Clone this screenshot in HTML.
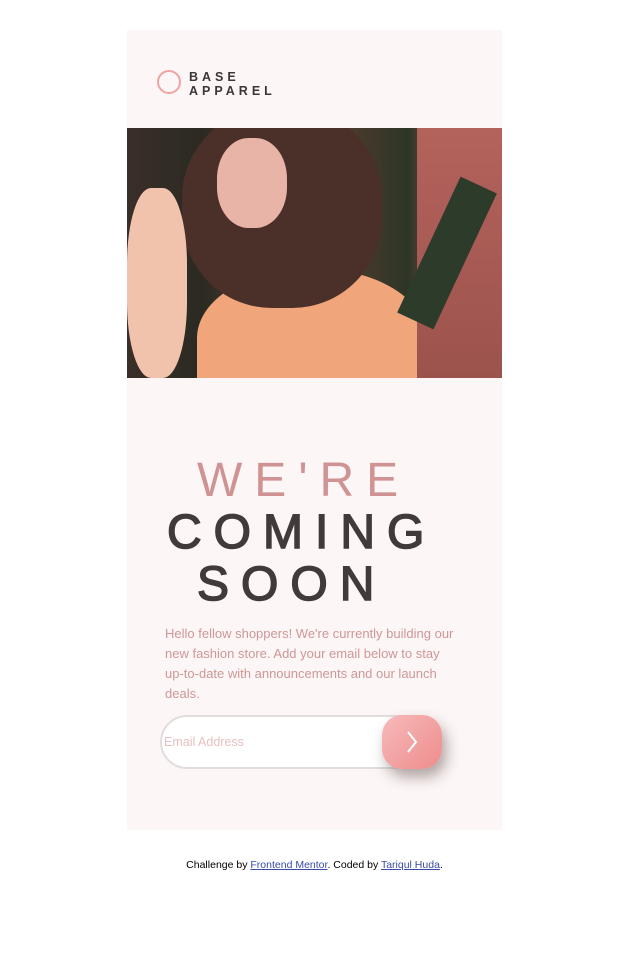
<!DOCTYPE html>
<html><head><style>
*{margin:0;padding:0;box-sizing:border-box}
body{width:629px;height:954px;background:#fff;font-family:"Liberation Sans",sans-serif;position:relative;overflow:hidden}
.card{position:absolute;left:127px;top:30px;width:375px;height:800px;background:#fdf6f6}
.logo{position:absolute;left:30px;top:40px}
.circ{position:absolute;left:0;top:0;width:24px;height:24px;border:2.5px solid #f0a3a3;border-radius:50%}
.lt{position:absolute;left:32px;top:0px;font-weight:bold;font-size:12.5px;letter-spacing:4px;line-height:14px;color:#3d3636;white-space:nowrap}
.img{position:absolute;left:0;top:98px;width:375px;height:250px;overflow:hidden;background:linear-gradient(90deg,#3a2e28 0%,#2b2a22 20%,#5a4036 40%,#4a3a2c 60%,#2d3527 75%,#b45e58 90%,#9a4c48 100%)}
h1{position:absolute;left:0;width:375px;top:425px;font-weight:normal;font-size:48px;line-height:52px;letter-spacing:12px}
.p{position:absolute;left:38px;top:594px;width:292px;font-size:13px;line-height:20px;color:#ce9797}
.inp{position:absolute;left:33px;top:685px;width:282px;height:54px;border:2px solid #e2dcdc;border-radius:28px;background:#fff}
.inp span{position:absolute;left:2px;top:18px;font-size:12.5px;color:#e8c0c0}
.btn{position:absolute;left:255px;top:685px;width:60px;height:54px;border-radius:20px;background:linear-gradient(135deg,#f7baba,#ee8c8c);box-shadow:4px 8px 14px rgba(80,60,60,.45)}
.foot{position:absolute;top:859px;left:0;width:629px;text-align:center;font-size:10.5px}
.foot a{color:#3a4ba8;text-decoration:underline}
</style></head><body>
<div class="card">
 <div class="logo"><div class="circ"></div><div class="lt">BASE<br>APPAREL</div></div>
 <div class="img">
  <div style="position:absolute;left:70px;top:140px;width:230px;height:140px;border-radius:50% 50% 0 0;background:#f0a67a"></div>
  <div style="position:absolute;left:55px;top:-20px;width:200px;height:200px;border-radius:45%;background:#4a3028"></div>
  <div style="position:absolute;left:90px;top:10px;width:70px;height:90px;border-radius:45%;background:#e8b4a8"></div>
  <div style="position:absolute;left:0;top:60px;width:60px;height:190px;background:#f1c3ad;border-radius:40%"></div>
  <div style="position:absolute;left:290px;top:0;width:85px;height:250px;background:linear-gradient(180deg,#b4625c,#9c534c)"></div>
  <div style="position:absolute;left:300px;top:50px;width:40px;height:150px;background:#2d3b2a;transform:rotate(25deg)"></div>
 </div>
 <h1><div style="color:#cf9393;padding-left:70px;font-size:48px">WE'RE</div><div style="color:#423a3a;padding-left:40px;-webkit-text-stroke:1.5px #423a3a">COMING</div><div style="color:#423a3a;padding-left:70px;-webkit-text-stroke:1.5px #423a3a">SOON</div></h1>
 <div class="p">Hello fellow shoppers! We're currently building our new fashion store. Add your email below to stay up-to-date with announcements and our launch deals.</div>
 <div class="inp"><span>Email Address</span></div>
 <div class="btn"><svg width="60" height="54" viewBox="0 0 60 54"><path d="M26 17 L34 27 L26 37" stroke="#fff" stroke-width="2" fill="none"/></svg></div>
</div>
<div class="foot">Challenge by <a>Frontend Mentor</a>. Coded by <a>Tariqul Huda</a>.</div>
</body></html>
